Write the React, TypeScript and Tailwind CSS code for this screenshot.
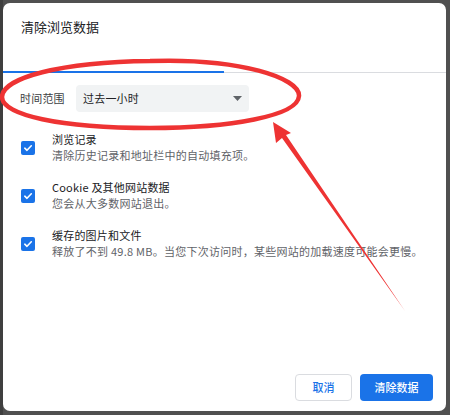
import React from "react";

const font = { fontFamily: '"Noto Sans CJK SC", "Noto Sans", sans-serif' };

function Check() {
  return (
    <div className="w-[14px] h-[14px] rounded-[2px] bg-[#1a73e8] flex items-center justify-center shrink-0">
      <svg width="10" height="10" viewBox="0 0 10 10">
        <path d="M1.8 5.2 L4 7.3 L8.3 2.8" stroke="white" strokeWidth="1.6" fill="none" strokeLinecap="round" strokeLinejoin="round" />
      </svg>
    </div>
  );
}

function Row({ title, desc }: { title: string; desc: string }) {
  return (
    <div className="flex items-center">
      <div className="w-[49px] pl-[18px]">
        <Check />
      </div>
      <div className="flex flex-col">
        <div className="text-[11px] leading-[16px] text-[#202124] tracking-[0.2px]">{title}</div>
        <div className="text-[11px] leading-[17px] text-[#5f6368] tracking-[0.25px]">{desc}</div>
      </div>
    </div>
  );
}

export default function App() {
  return (
    <div className="w-[450px] h-[415px] bg-[#505050] relative overflow-hidden" style={font}>
      <div className="absolute left-0 top-0 w-[3px] h-full bg-[#3f3f3f]" />
      <div className="relative ml-[3px] pt-[3px] w-[443px]">
        <div className="w-[443px] h-[408px] bg-white rounded-[7px] flex flex-col">
          <div className="pl-[18px] pt-[15px] text-[13px] leading-[18px] text-[#202124]">清除浏览数据</div>
          <div className="mt-[35px] flex items-end">
            <div className="w-[221px] h-[2px] bg-[#1a73e8]" />
            <div className="flex-1 h-[1px] bg-[#dadce0]" />
          </div>
          <div className="mt-[12px] flex items-center pl-[17px]">
            <div className="text-[11px] text-[#3c4043] w-[56px] tracking-[0.2px]">时间范围</div>
            <div className="w-[173px] h-[27px] bg-[#f1f3f4] rounded-[4px] flex items-center justify-between pl-[7px] pr-[7px]">
              <span className="text-[11px] text-[#202124] tracking-[0.2px]">过去一小时</span>
              <svg width="9" height="5" viewBox="0 0 9 5">
                <path d="M0 0 L9 0 L4.5 5 Z" fill="#5f6368" />
              </svg>
            </div>
          </div>
          <div className="mt-[19px] flex flex-col gap-[15px]">
            <Row title="浏览记录" desc="清除历史记录和地址栏中的自动填充项。" />
            <Row title="Cookie 及其他网站数据" desc="您会从大多数网站退出。" />
            <Row title="缓存的图片和文件" desc="释放了不到 49.8 MB。当您下次访问时，某些网站的加载速度可能会更慢。" />
          </div>
          <div className="mt-auto mb-[10px] flex justify-end gap-[8px] pr-[13px]">
            <button className="w-[57px] h-[27px] border border-[#dadce0] rounded-[4px] text-[11px] font-medium text-[#1a73e8] bg-white">取消</button>
            <button className="w-[73px] h-[27px] rounded-[4px] text-[11px] font-medium text-white bg-[#1a73e8]">清除数据</button>
          </div>
        </div>
      </div>
      <svg className="absolute left-0 top-0 pointer-events-none" width="450" height="415" viewBox="0 0 450 415">
        <path d="M150 61 C 240 58, 300 78, 299 96 C 298 116, 230 128, 150 128 C 60 128, 2 115, 2 97 C 2 78, 60 62, 150 61" stroke="#ee3333" strokeWidth="4.5" fill="none" />
        <path d="M273 122 L291 133 L286 135 L405 311 L282 138 L276 143 Z" fill="#ee3333" />
      </svg>
    </div>
  );
}
